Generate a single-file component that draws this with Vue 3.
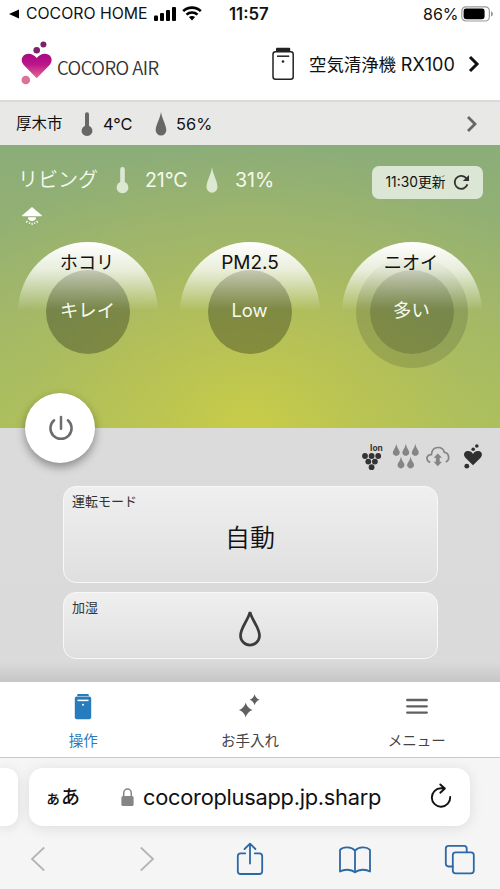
<script setup>
const gauges = [
  { name: 'ホコリ', value: 'キレイ', high: false },
  { name: 'PM2.5', value: 'Low', high: false },
  { name: 'ニオイ', value: '多い', high: true },
]
const drops = [[6, 0], [15.5, 0], [25, 0], [10.7, 12.7], [20.3, 12.7]]
const ions = [[3, 12], [9.6, 12], [16.2, 12], [6.3, 17.6], [12.9, 17.6], [9.6, 23.2]]
</script>

<template>
  <div class="screen">
    <div class="status">
      <svg class="back" width="11" height="10"><path d="M0 5 10 0.5V9.5Z" /></svg>
      <span class="t carrier">COCORO HOME</span>
      <svg class="signal" width="23" height="16">
        <rect x="0" y="9.5" width="4" height="5.5" rx="1" /><rect x="6" y="7" width="4" height="8" rx="1" />
        <rect x="12" y="4" width="4" height="11" rx="1" /><rect x="18" y="1" width="4" height="14" rx="1" />
      </svg>
      <svg class="wifi" width="20" height="15" fill="none" stroke="#000" stroke-width="2.6">
        <path d="M1.2 5.1C6 .4 14 .4 18.8 5.1M4.5 8.6c3-2.8 8-2.8 11 0" />
        <path d="M6.9 11.1c1.8-1.5 4.4-1.5 6.2 0L10 14.4Z" fill="#000" stroke="none" />
      </svg>
      <b class="t clock">11:57</b>
      <span class="t percent">86%</span>
      <svg class="battery" width="33" height="16">
        <rect x=".8" y=".8" width="27.6" height="14.2" rx="4.2" fill="none" stroke="#999" stroke-width="1.2" />
        <rect x="2.6" y="2.6" width="21" height="10.6" rx="2.4" /><path d="M30 5.2q2 .7 2 2.7t-2 2.7Z" fill="#999" />
      </svg>
    </div>

    <header class="header">
      <svg class="logo" width="32" height="44">
        <defs><linearGradient id="heart" x2="0" y2="1"><stop offset="0" stop-color="#a60a82" /><stop offset=".45" stop-color="#bd168b" /><stop offset="1" stop-color="#e66b91" /></linearGradient></defs>
        <path d="M15.7 37.2 3 24.2C-.6 20.2.3 15.2 4.3 13.4c4-1.8 8.5-.2 11.4 3.7 2.9-3.9 7.4-5.5 11.4-3.7 4 1.8 4.9 6.8 1.3 10.8Z" fill="url(#heart)" />
        <circle cx="22.4" cy="3.5" r="3" fill="#7d216b" /><circle cx="15.7" cy="9.3" r="3.3" fill="#7d216b" /><circle cx="4.8" cy="39" r="4.3" fill="#dc7299" />
      </svg>
      <span class="t brand">COCORO AIR</span>
      <svg class="purifier" width="22" height="34" fill="none" stroke="#222" stroke-width="1.5">
        <rect x="1" y="4.8" width="20.2" height="27.4" rx="2.5" /><path d="M5 9.2H17.2" /><path d="M4 1.8Q4 .8 5 .8H17.2q1 0 1 1V4H4Z" fill="#222" stroke="none" /><circle cx="11" cy="14.5" r="1.3" fill="#222" stroke="none" />
      </svg>
      <span class="t device">空気清浄機 <span class="model">RX100</span></span>
      <svg class="chev" width="12" height="18" fill="none" stroke="#111" stroke-width="3"><path d="m2 2 7 7-7 7" /></svg>
    </header>

    <div class="weather">
      <span class="t city">厚木市</span>
      <svg class="w-therm" width="12" height="24" fill="#676767"><path d="M4 2.3a2 2 0 0 1 4 0V13.7a5.4 5.4 0 1 1-4 0Z" /></svg>
      <span class="t w-temp">4°C</span>
      <svg class="w-drop" width="12" height="24" fill="#676767"><path d="M6 0C7 7 11.3 13 11.3 18.3a5.3 5.3 0 0 1-10.6 0C.7 13 5 7 6 0Z" /></svg>
      <span class="t w-hum">56%</span>
      <svg class="w-chev" width="12" height="18" fill="none" stroke="#666" stroke-width="2.8"><path d="m2 2 7 7-7 7" /></svg>
    </div>

    <section class="air">
      <div class="room">
        <span class="t room-name">リビング</span>
        <svg class="r-therm" width="13" height="27" fill="#dce8d2"><path d="M4.2 2.2a2.3 2.3 0 0 1 4.6 0V15a5.9 5.9 0 1 1-4.6 0Z" /></svg>
        <span class="t r-temp">21°C</span>
        <svg class="r-drop" width="12" height="27" fill="#dce8d2"><path d="M6 0C7 8 11.5 14 11.5 20.2a5.5 5.5 0 0 1-11 0C.5 14 5 8 6 0Z" /></svg>
        <span class="t r-hum">31%</span>
        <div class="update">
          <span class="t">11:30更新</span>
          <svg width="17" height="17" fill="none" stroke="#333" stroke-width="1.8"><path d="M14.4 10.4A6.5 6.5 0 1 1 12.7 3.6L14.5 5.5" /><path d="M16 1v6H9.8Z" fill="#333" stroke="none" /></svg>
        </div>
      </div>
      <svg class="lamp" width="22" height="20" fill="#fff"><path d="M11 1 1 9.4q0 .8 1 .8H20q1 0 1-.8ZM7 11.2h8a4 3.8 0 0 1-8 0Z" /><path d="m6.5 15-1.3 1.6M8.8 16.4l-.5 1.5M11.1 16.7v2.4M13.4 16.4l.5 1.5M15.5 15l1.3 1.6" fill="none" stroke="#fff" stroke-width="1.2" /></svg>
      <div class="gauges">
        <div v-for="g in gauges" :key="g.name" class="gauge">
          <div class="ring" :class="{ high: g.high }"><div class="disc"><span class="t">{{ g.value }}</span></div></div>
          <span class="t gauge-name" :class="{ latin: g.name === 'PM2.5' }">{{ g.name }}</span>
        </div>
      </div>
    </section>

    <section class="control">
      <button class="power"><svg width="28" height="28" fill="none" stroke="#6c6c6c" stroke-width="2.5" stroke-linecap="round"><path d="M7.1 6.2a10.6 10.6 0 1 0 13.8 0M14 3V14.7" /></svg></button>
      <div class="flags">
        <svg class="ion" width="23" height="27" fill="#333"><circle v-for="c in ions" :key="c.join()" :cx="c[0]" :cy="c[1]" r="2.9" /><text x="8.1" y="7.2">Ion</text></svg>
        <svg class="drops" width="30" height="28" fill="#858585"><path v-for="d in drops" :key="d.join()" :transform="`translate(${d[0] - 2.7} ${d[1] + 1})`" d="M0 0Q.6 3.2 2.8 6.4C4.5 9 2.6 11.7 0 11.7S-4.5 9-2.8 6.4Q-.6 3.2 0 0Z" /></svg>
        <svg class="cloud" width="24" height="22" fill="none" stroke="#858585" stroke-width="1.7"><path d="M4.2 16.4C.7 15.5 0 11.3 2.3 9.5 3.3 8.6 4.4 8.5 5.4 8.6 5.8 4.2 8.5 1.5 12 1.5c3.2 0 5.5 1.8 6.3 4.8 5 .5 5.9 7.6 1.5 9.7" /><path d="m11.8 7.5 4.2 4.3h-2.3v4h2.3l-4.2 4.4-4.2-4.4h2.3v-4H7.6Z" fill="#858585" stroke="none" /></svg>
        <svg class="linked" width="20" height="26" fill="#303030"><path d="M10 21.3 2.4 13.7C-.2 10.7 1.3 7.3 4.4 7c2.6-.3 4.5 1 5.6 3 1.1-2 3-3.3 5.6-3 3.1.3 4.6 3.7 2 6.7Z" /><circle cx="13.8" cy="2" r="1.8" /><circle cx="10.2" cy="5.3" r="1.8" /><circle cx="3.8" cy="22.2" r="2.4" /></svg>
      </div>
      <div class="card mode"><span class="t label">運転モード</span><span class="t auto">自動</span></div>
      <div class="card humid"><span class="t label">加湿</span><svg width="24" height="40" fill="none" stroke="#3b3b3b" stroke-width="2.7"><path d="M12 4C13.6 11.5 21.5 20 21.5 27.6a9.5 9.5 0 0 1-19 0C2.5 20 10.4 11.5 12 4Z" /></svg></div>
    </section>

    <nav class="tabs">
      <div class="tab active"><svg width="18" height="28" fill="#277cbd"><path d="M3.2 3V2q0-1 1-1h9.6q1 0 1 1v1Z" /><rect x=".8" y="3.6" width="16.4" height="22.6" rx="2" /><path d="M3.5 7.4h11" stroke="#fff" stroke-width="1.5" /><circle cx="9" cy="11.7" r="1" fill="#fff" /></svg><span class="t">操作</span></div>
      <div class="tab"><svg width="24" height="28" fill="#606060"><path d="M7.7 9.8Q9.4 15.4 14.6 17 9.4 18.6 7.7 24.4 6 18.6 .9 17 6 15.4 7.7 9.8ZM16.6 1.3Q17.8 5.5 21.6 6.8 17.8 8.1 16.6 12.3 15.4 8.1 11.6 6.8 15.4 5.5 16.6 1.3Z" /></svg><span class="t">お手入れ</span></div>
      <div class="tab"><svg width="24" height="28" stroke="#606060" stroke-width="2.3" stroke-linecap="round"><path d="M2.2 7H21.8M2.2 13.3H21.8M2.2 19.6H21.8" /></svg><span class="t">メニュー</span></div>
    </nav>

    <footer class="browser">
      <div class="address-row">
        <div class="previous"></div>
        <div class="address">
          <span class="t reader"><small>ぁ</small>あ</span>
          <svg class="lock" width="13" height="19" fill="#858585"><rect x=".4" y="8" width="12.2" height="10" rx="1.6" /><path d="M2.7 9V5.3a3.8 4.2 0 0 1 7.6 0V9" fill="none" stroke="#858585" stroke-width="1.5" /></svg>
          <span class="t url">cocoroplusapp.jp.sharp</span>
          <svg class="reload" width="22" height="26" fill="none" stroke="#111" stroke-width="1.9" stroke-linecap="round" stroke-linejoin="round"><path d="M20.2 14A9.2 9.2 0 1 1 11 5.3h3.7M10.3 1.5l4.5 4-4.5 4.2" /></svg>
        </div>
      </div>
      <div class="tools">
        <svg class="prev" width="16" height="26" stroke="#b4b4b6" stroke-width="1.8"><path d="M14.2 1.5 2 13 14.2 24.5" /></svg>
        <svg class="next" width="16" height="26" stroke="#b4b4b6" stroke-width="1.8"><path d="M1.8 1.5 14 13 1.8 24.5" /></svg>
        <svg class="share" width="28" height="34"><path d="M9.2 11.4H4.7Q1.8 11.4 1.8 14.3V29.2Q1.8 32 4.7 32H23.3q2.9 0 2.9-2.8V14.3q0-2.9-2.9-2.9H18.8M14 21.5V1.8M8.6 7 14 1.6 19.4 7" /></svg>
        <svg class="book" width="34" height="28"><path d="M17 4.6C13.3.5 5.5.2 2 3.8V25.6c4-2.6 11-2.6 15 .7 4-3.3 11-3.3 15-.7V3.8C28.5.2 20.7.5 17 4.6ZM17 4.6V26" /></svg>
        <svg class="pages" width="32" height="32"><path d="M8.7 22.5H4.7Q1.8 22.5 1.8 19.6V4.5q0-2.7 2.9-2.7H20q2.7 0 2.7 2.7V8" /><rect x="8.8" y="8.4" width="21" height="21" rx="2.8" /></svg>
      </div>
    </footer>
  </div>
</template>

<style>
body { margin: 0; }
</style>
<style scoped>
* { box-sizing: border-box; }
svg { display: block; flex: none; overflow: visible; }
.screen { width: 500px; height: 889px; overflow: hidden; background: #fff; color: #111; font-family: Inter, "Noto Sans CJK JP", sans-serif; }
.t { white-space: nowrap; flex: none; line-height: 24px; }
.status { height: 28px; display: flex; align-items: center; padding-left: 9px; }
.carrier { font-size: 15.8px; width: 123px; margin-left: 6px; letter-spacing: 0; }
.signal { margin-left: 5px; margin-top: -1px; }
.wifi { margin-left: 5px; margin-top: -2px; }
.clock { width: 44px; margin-left: 27px; font-size: 16.8px; font-weight: 600; }
.percent { width: 36px; margin-left: 150px; font-size: 16px; }
.battery { margin-left: 2px; margin-top: -1px; }
.header { height: 74px; display: flex; align-items: center; border-bottom: 2px solid #dadada; padding-left: 21px; }
.logo { margin-top: -2px; }
.brand { width: 105px; margin-left: 4px; margin-top: 5px; font-family: "Noto Sans CJK JP", sans-serif; font-size: 18.5px; font-weight: 350; letter-spacing: -.55px; color: #333; }
.purifier { margin-left: 110px; }
.device { width: 150px; margin-left: 15px; margin-top: 1px; font-size: 17.4px; }
.model { font-size: 18px; }
.chev { margin-left: 9px; }
.weather { height: 43px; background: #e8e8e6; display: flex; align-items: center; padding-left: 16px; }
.city { width: 48px; font-size: 15.5px; }
.w-therm { margin-left: 17px; margin-top: 1px; }
.w-temp { width: 32px; font-size: 16.4px; margin-left: 10px; }
.w-drop { margin-left: 20px; margin-top: 1px; }
.w-hum { width: 40px; font-size: 16.4px; margin-left: 9px; }
.w-chev { margin-left: 250px; }
.air { height: 283px; color: #f5faee; background: radial-gradient(ellipse 72% 100% at 50% 100%, #c8cc48 0%, rgba(195,199,76,.72) 28%, rgba(184,192,86,.4) 62%, transparent 100%), linear-gradient(#8bad79, #9bb46e 55%, #a7bf60); }
.room { height: 60px; padding: 5px 0 0 18px; display: flex; align-items: center; }
.room-name { width: 82px; font-size: 20px; font-weight: 350; }
.room .t { margin-top: 5px; }
.room .update .t { margin-top: 0; }
.r-therm { margin-left: 16px; margin-top: 6px; }
.r-temp { width: 46px; margin-left: 16px; font-size: 19.6px; letter-spacing: -.1px; }
.r-drop { margin-left: 15px; margin-top: 6px; }
.r-hum { width: 42px; margin-left: 17px; font-size: 19.6px; }
.update { width: 111px; height: 33px; margin-left: 95px; margin-top: 9px; border-radius: 7px; background: #dce6d4; color: #111; display: flex; align-items: center; justify-content: center; gap: 7px; font-size: 13.8px; }
.lamp { margin-left: 20.5px; margin-top: 1px; }
.gauges { display: grid; grid-template-columns: repeat(3, 140px); column-gap: 22px; padding: 16px 0 0 18px; }
.gauge { width: 140px; height: 140px; display: grid; place-items: center; border-radius: 50%; background: linear-gradient(#fff, rgba(255,255,255,.76) 20%, transparent 49%); }
.ring, .gauge-name { grid-area: 1 / 1; }
.ring { width: 112px; height: 112px; border-radius: 50%; display: grid; place-items: center; }
.ring.high { background: linear-gradient(rgba(20,20,20,0), rgba(20,25,20,.15) 45%); }
.disc { width: 84px; height: 84px; border-radius: 50%; background: linear-gradient(rgba(30,35,10,.18), rgba(20,25,12,.32) 45%); display: flex; align-items: center; justify-content: center; font-size: 18.4px; padding: 0 1px 4px 0; }
.high .disc { background: linear-gradient(rgba(30,35,10,.12), rgba(20,25,12,.19) 45%); }
.gauge-name { align-self: start; margin: 8px 2px 0 0; font-size: 18.2px; color: #111; }
.latin { font-size: 19px; margin: 9px 0 0; }
.control { display: flow-root; height: 254px; background: linear-gradient(#dbdbdb, #dadada 92%, #c6c6c6); }
.power { width: 70px; height: 70px; margin: -35px 0 0 25px; padding: 0; border: 0; border-radius: 50%; background: #fff; box-shadow: 0 4px 10px rgba(0,0,0,.38); position: relative; display: flex; align-items: center; justify-content: center; }
.power svg { margin-left: 1px; }
.flags { height: 30px; margin-top: -21px; padding-left: 362px; display: flex; align-items: center; }
.ion text { font: bold 8.4px Inter, sans-serif; }
.drops { margin-left: 8px; }
.cloud { margin-left: 3px; }
.linked { margin-left: 13px; }
.card { width: 375px; margin-left: 63px; border: 1.5px solid #f8f8f8; border-radius: 13px; background: linear-gradient(#efefef, #dfdfdf); display: grid; justify-items: center; align-items: center; }
.card > * { grid-area: 1 / 1; }
.mode { height: 97px; margin-top: 14px; }
.humid { height: 67px; margin-top: 9px; }
.label { justify-self: start; align-self: start; margin: 2px 0 0 8px; font-size: 13px; color: #333; }
.auto { font-size: 25px; font-weight: 350; margin: 6px 1px 0 0; }
.humid svg { margin: 4px 1px 0 0; }
.tabs { height: 76px; border-bottom: 1px solid #cacaca; background: #fff; display: grid; grid-template-columns: repeat(3, 1fr); padding-top: 11px; }
.tab { display: flex; flex-direction: column; align-items: center; gap: 8px; font-size: 14.5px; color: #444; }
.active { color: #277cbd; }
.browser { height: 131px; background: #f5f5f6; padding-top: 10px; }
.address-row { display: flex; height: 58px; }
.previous { width: 18px; background: #fff; border-radius: 0 12px 12px 0; box-shadow: 0 2px 12px rgba(0,0,0,.1); }
.address { width: 441px; margin-left: 11px; border-radius: 14px; background: #fff; box-shadow: 0 2px 14px rgba(0,0,0,.1); display: flex; align-items: center; }
.reader { width: 35px; margin-left: 16px; margin-top: 2px; font-size: 19px; font-weight: 500; }
.reader small { font-size: 16px; }
.lock { margin-left: 41px; }
.url { width: 240px; margin-left: 9px; font-size: 21.8px; letter-spacing: -.25px; }
.reload { margin-left: 47px; margin-top: -3px; }
.tools { display: flex; align-items: center; height: 66px; padding-left: 30px; fill: none; }
.next { margin-left: 93px; }
.share, .book, .pages { stroke: #2d68a4; stroke-width: 1.8; stroke-linejoin: round; stroke-linecap: round; }
.share { margin-left: 81px; margin-top: -1px; }
.book { margin-left: 74px; margin-top: 1px; }
.pages { margin-left: 72px; margin-top: 1px; }
</style>
